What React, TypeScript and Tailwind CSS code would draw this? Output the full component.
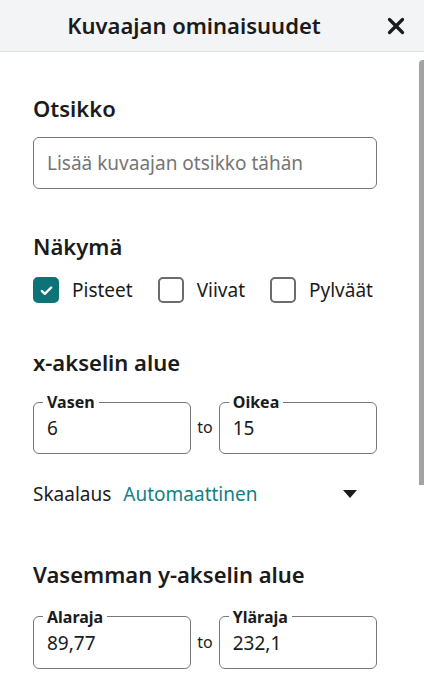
import { X } from 'lucide-react'

const font = { fontFamily: '"Noto Sans", "Open Sans", sans-serif' }

function Check({ label, checked }: { label: string; checked?: boolean }) {
  return (
    <label className="flex items-center gap-[13px]">
      <span
        className={`flex h-[26px] w-[26px] items-center justify-center rounded-[5px] border-2 ${
          checked ? 'border-[#0e7377] bg-[#0e7377]' : 'border-[#6b6b6b] bg-white'
        }`}
      >
        {checked && (
          <svg viewBox="0 0 16 16" className="h-[15px] w-[15px]">
            <path d="M3 8.5l3.2 3L13 4.8" fill="none" stroke="white" strokeWidth="2.6" strokeLinecap="round" strokeLinejoin="round" />
          </svg>
        )}
      </span>
      <span className="text-[19px] leading-[26px] text-[#1b1b1b]">{label}</span>
    </label>
  )
}

function RangeBox({ legend, value }: { legend: string; value: string }) {
  return (
    <fieldset className="flex-1 rounded-[6px] border border-[#777] px-[9px] pb-[13px]">
      <legend className="px-[4px] text-[16px] font-bold leading-[20px] text-[#1b1b1b]">{legend}</legend>
      <div className="mt-[4px] pl-[4px] text-[19px] leading-[24px] text-[#1b1b1b]">{value}</div>
    </fieldset>
  )
}

export default function App() {
  return (
    <div style={font} className="relative h-[696px] w-[424px] overflow-hidden bg-white text-[#1b1b1b]">
      {/* Header */}
      <div className="flex h-[52px] items-center border-b border-[#dfe1e4] bg-[#f3f4f6]">
        <h1 className="flex-1 pl-[8px] text-center text-[22px] font-semibold text-[#1b1b1b]">Kuvaajan ominaisuudet</h1>
        <button className="mr-[12px] flex h-[32px] w-[32px] items-center justify-center">
          <X className="h-[26px] w-[26px] text-[#1b1b1b]" strokeWidth={3} />
        </button>
      </div>

      {/* Scrollbar thumb */}
      <div className="absolute right-0 top-[60px] h-[425px] w-[5px] rounded-tl-[4px] bg-[#a3a3a3]" />

      <div className="pl-[33px] pr-[47px] pt-[42px]">
        <h2 className="text-[22px] font-semibold leading-[28px]">Otsikko</h2>
        <div className="mt-[15px] flex h-[52px] items-center rounded-[6px] border border-[#777] px-[13px] text-[19px] text-[#757575]">
          Lisää kuvaajan otsikko tähän
        </div>

        <h2 className="mt-[43px] text-[22px] font-semibold leading-[28px]">Näkymä</h2>
        <div className="mt-[17px] flex items-center gap-[25px]">
          <Check label="Pisteet" checked />
          <Check label="Viivat" />
          <Check label="Pylväät" />
        </div>

        <h2 className="mt-[45px] text-[22px] font-semibold leading-[28px]">x-akselin alue</h2>
        <div className="mt-[16px] flex items-center gap-[6px]">
          <RangeBox legend="Vasen" value="6" />
          <span className="pt-[8px] text-[16px] text-[#1b1b1b]">to</span>
          <RangeBox legend="Oikea" value="15" />
        </div>

        <div className="mt-[26px] flex items-center">
          <span className="text-[19px] text-[#1b1b1b]">Skaalaus</span>
          <span className="ml-[12px] flex-1 text-[19px] text-[#137f85]">Automaattinen</span>
          <svg viewBox="0 0 14 8" className="mr-[20px] h-[8px] w-[14px]">
            <path d="M0 0h14L7 8z" fill="#1b1b1b" />
          </svg>
        </div>

        <h2 className="mt-[51px] text-[22px] font-semibold leading-[28px]">Vasemman y-akselin alue</h2>
        <div className="mt-[19px] flex items-center gap-[6px]">
          <RangeBox legend="Alaraja" value="89,77" />
          <span className="pt-[8px] text-[16px] text-[#1b1b1b]">to</span>
          <RangeBox legend="Yläraja" value="232,1" />
        </div>
      </div>
    </div>
  )
}
